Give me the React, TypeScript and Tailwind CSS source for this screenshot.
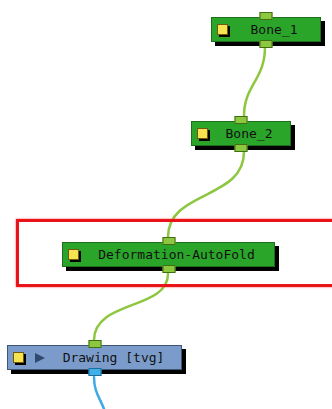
import React from "react";

type NodeProps = {
  left: number;
  top: number;
  width: number;
  label: string;
  kind: "green" | "blue";
};

function Node({ left, top, width, label, kind }: NodeProps) {
  const green = kind === "green";
  return (
    <div className="absolute" style={{ left, top, width, height: 25 }}>
      <div
        className={
          green
            ? "relative flex h-full w-full items-center border border-[#1d6e1d] bg-[#2aa52a] shadow-[4px_4px_0_#000]"
            : "relative flex h-full w-full items-center border border-[#3d5673] bg-[#7b9ccb] shadow-[4px_4px_0_#000]"
        }
      >
        <div className="ml-[5px] h-[11px] w-[11px] shrink-0 border border-[#6b5a10] bg-[#f7e24f] shadow-[2px_2px_0_#000]" />
        {!green && (
          <svg width="12" height="10" viewBox="0 0 12 10" className="ml-[10px] shrink-0">
            <polygon points="1,0 11,5 1,10" fill="#2f4a6e" />
          </svg>
        )}
        <div className="flex-1 whitespace-pre text-center text-[13px] leading-none text-[#111] [font-family:'DejaVu_Sans_Mono',monospace]">
          {label}
        </div>
        <div className="absolute left-1/2 top-[-6px] h-[8px] w-[13px] -translate-x-1/2 border border-[#3f6e14] bg-[#8dc63f]" />
        <div
          className={
            green
              ? "absolute bottom-[-7px] left-1/2 h-[8px] w-[13px] -translate-x-1/2 border border-[#3f6e14] bg-[#8dc63f]"
              : "absolute bottom-[-7px] left-1/2 h-[8px] w-[13px] -translate-x-1/2 border border-[#1d6e9a] bg-[#3fb0e8]"
          }
        />
      </div>
    </div>
  );
}

export default function App() {
  return (
    <div className="relative h-[409px] w-[332px] overflow-hidden bg-white">
      <svg className="absolute left-0 top-0" width="332" height="409" viewBox="0 0 332 409">
        <g fill="none" strokeWidth="2.5" strokeLinecap="round">
          <path d="M265 47 C265 80 244 85 244 116" stroke="#8dc63f" />
          <path d="M244 152 C244 200 168 190 168 237" stroke="#8dc63f" />
          <path d="M168 274 C168 310 94 300 94 340" stroke="#8dc63f" />
          <path d="M94 377 C94 392 100 398 104 409" stroke="#3fa9e8" />
        </g>
      </svg>

      <div className="absolute left-[16px] top-[219px] h-[68px] w-[330px] border-[3px] border-[#e8141a] shadow-[0_0_2px_#f55]" />

      <Node left={211} top={17} width={110} label="Bone_1" kind="green" />
      <Node left={191} top={121} width={100} label="Bone_2" kind="green" />
      <Node left={62} top={242} width={213} label="Deformation-AutoFold" kind="green" />
      <Node left={7} top={345} width={175} label="Drawing [tvg]" kind="blue" />
    </div>
  );
}
